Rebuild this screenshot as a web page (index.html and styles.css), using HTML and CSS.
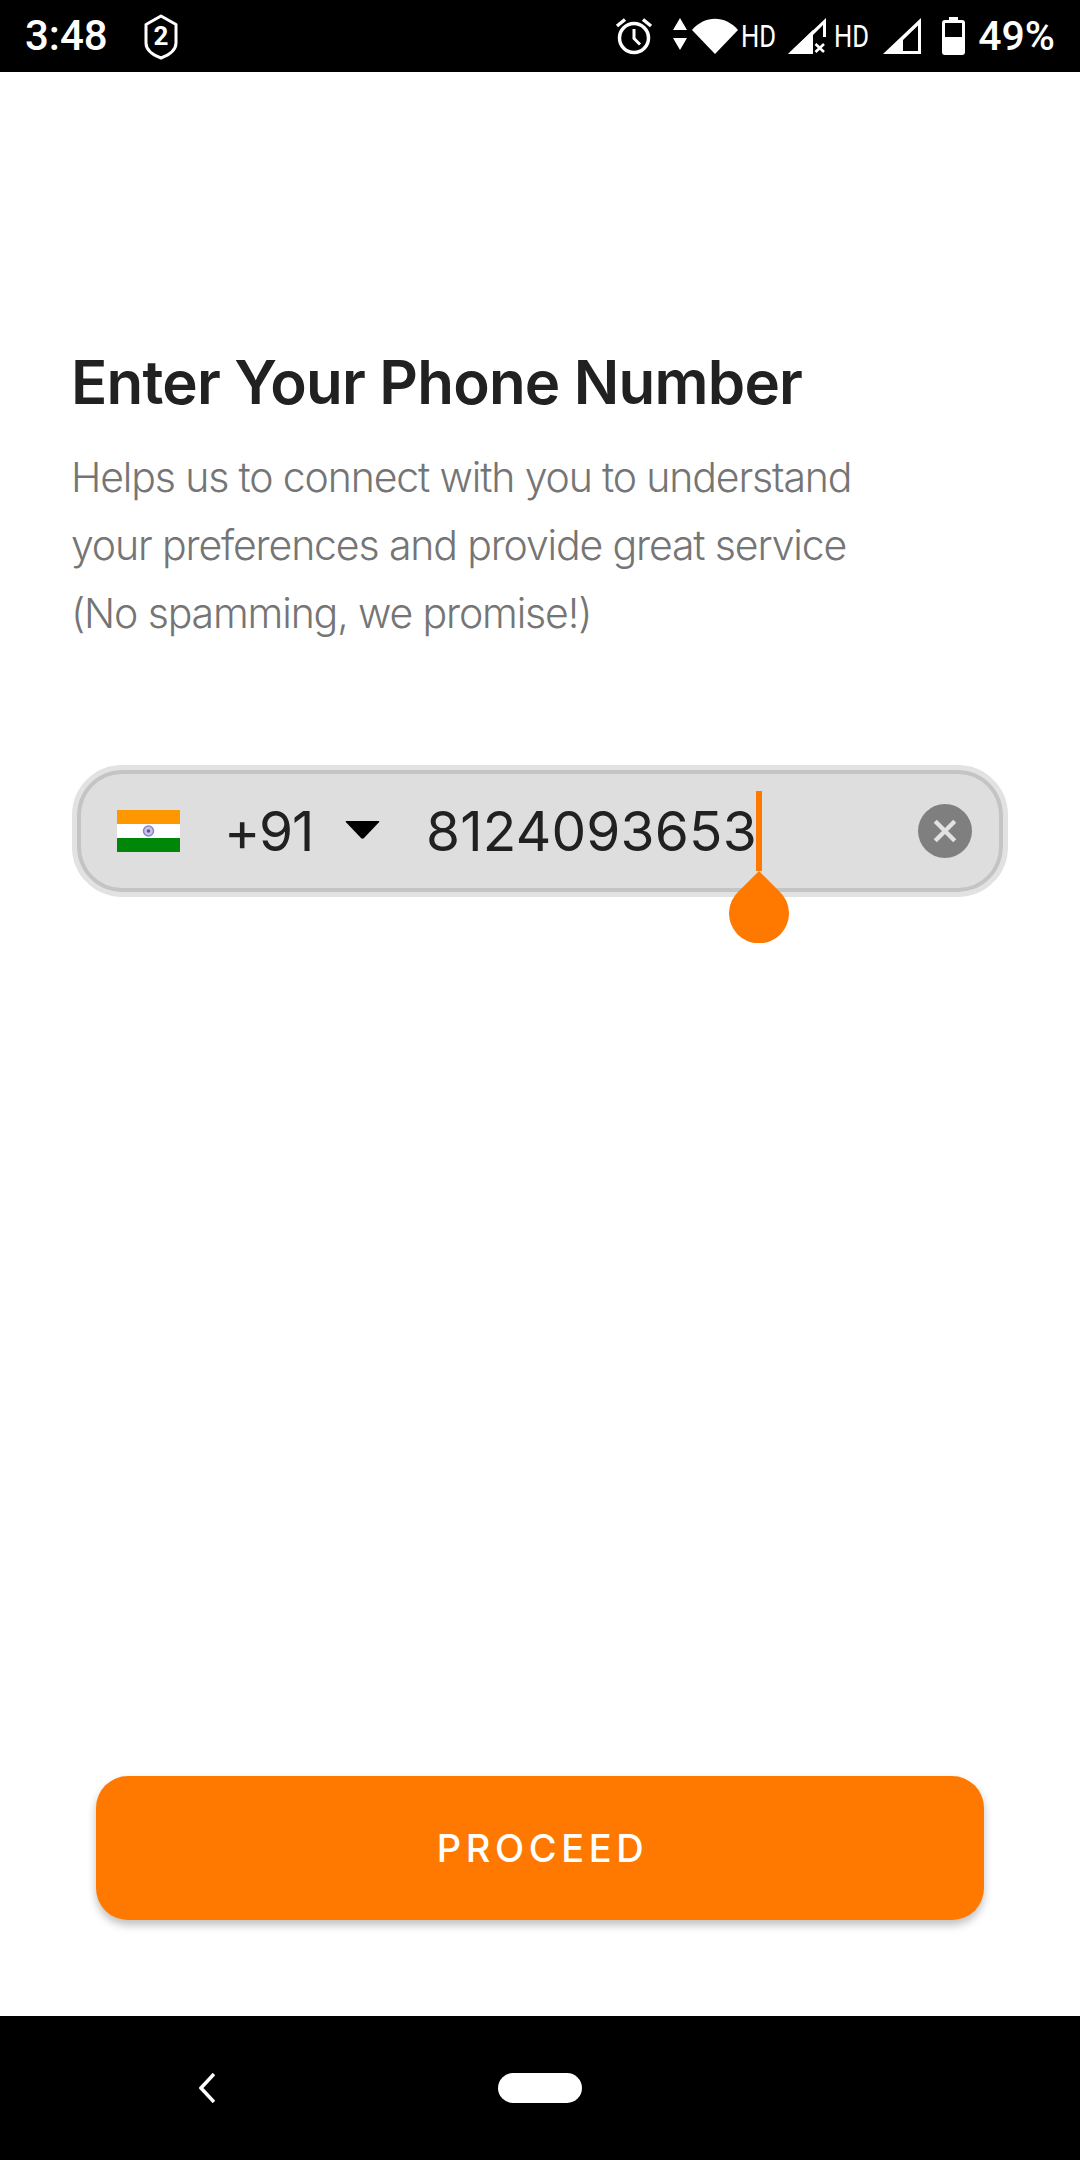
FILE: index.html
```html
<!DOCTYPE html>
<html lang="en">
<head>
<meta charset="utf-8">
<title>Enter Your Phone Number</title>
<link rel="stylesheet" href="styles.css">
</head>
<body>
<div class="phone">
  <header class="status">
    <div class="status-left">
      <span class="time">3:48</span>
      <span class="shield">
        <svg width="34" height="46" viewBox="0 0 34 46"><path d="M17 2 L32 10.500 V29 C32 36 25 41 17 44 C9 41 2 36 2 29 V10.500 Z" fill="none" stroke="#fff" stroke-width="3" stroke-linejoin="round"/></svg>
        <span class="shield-num">2</span>
      </span>
    </div>
    <div class="status-right">
      <svg class="i-alarm" width="38" height="38" viewBox="0 0 38 38"><circle cx="19" cy="21" r="14.500" fill="none" stroke="#fff" stroke-width="3.500"/><path d="M19 12 V21.500 L25 27.500" fill="none" stroke="#fff" stroke-width="3"/><path d="M2 9 L10 2.500 M36 9 L28 2.500" stroke="#fff" stroke-width="3.500"/></svg>
      <svg class="i-arrows" width="14" height="32" viewBox="0 0 14 32"><path d="M7 0 L14 12 H0 Z M0 20 H14 L7 32 Z" fill="#fff"/></svg>
      <svg class="i-wifi" width="46" height="36" viewBox="0 0 46 36"><path d="M0 12 C13 -3 33 -3 46 12 L23 36 Z" fill="#fff"/></svg>
      <span class="hd">HD</span>
      <svg class="i-sig1" width="38" height="36" viewBox="0 0 38 36"><path d="M0 36 L38 0 V19 L35 19 V7 L25 17 Z" fill="#fff"/><path d="M0 36 L25 12 V36 Z" fill="#fff"/><path d="M26 22 H38 V36 H26 Z" fill="#000"/><path d="M27.500 26 L36 34 M36 26 L27.500 34" stroke="#fff" stroke-width="2.600"/></svg>
      <span class="hd hd-2">HD</span>
      <svg class="i-sig2" width="38" height="36" viewBox="0 0 38 36"><path fill-rule="evenodd" d="M0 36 L38 0 V36 Z M20 33 H35 V7.500 L20 22 Z" fill="#fff"/></svg>
      <svg class="i-batt" width="23" height="38" viewBox="0 0 23 38"><path fill-rule="evenodd" d="M7 0 H16 V3 H20 Q23 3 23 6 V35 Q23 38 20 38 H3 Q0 38 0 35 V6 Q0 3 3 3 H7 Z M3 6 V20 H20 V6 Z" fill="#fff"/></svg>
      <span class="pct">49%</span>
    </div>
  </header>

  <main class="content">
    <h1 class="title">Enter Your Phone Number</h1>
    <p class="sub">Helps us to connect with you to understand<br>your preferences and provide great service<br>(No spamming, we promise!)</p>

    <div class="field">
      <svg class="flag" width="63" height="42" viewBox="0 0 63 42"><rect width="63" height="14" fill="#ff9800"/><rect y="14" width="63" height="14" fill="#fff"/><rect y="28" width="63" height="14" fill="#00870a"/><circle cx="31.500" cy="21" r="5" fill="#c9c3e6" stroke="#8c86c4" stroke-width="1.500"/><circle cx="31.500" cy="21" r="1.800" fill="#5a52a8"/></svg>
      <span class="code">+91</span>
      <svg class="caret-down" width="35" height="18" viewBox="0 0 35 18"><path d="M1.500 0 H33.500 Q35 0 34 1.200 L19 17 Q17.500 18.500 16 17 L1 1.200 Q0 0 1.500 0 Z" fill="#000"/></svg>
      <span class="number">8124093653</span>
      <span class="clear"><svg width="26" height="26" viewBox="0 0 24 24"><path d="M3 3 L21 21 M21 3 L3 21" stroke="#e2e2e2" stroke-width="4"/></svg></span>
      <span class="cursor"></span>
      <svg class="handle" width="60" height="72" viewBox="0 0 60 72"><path d="M30 0 L50 20 A30 30 0 1 1 10 20 Z" fill="#ff7900"/></svg>
    </div>

    <div class="spacer"></div>

    <button class="proceed" type="button">PROCEED</button>
  </main>

  <footer class="nav">
    <svg class="back" width="16" height="30" viewBox="0 0 16 30"><path d="M15 1 L2 15 L15 29" fill="none" stroke="#fff" stroke-width="3.500"/></svg>
    <span class="home"></span>
  </footer>
</div>
</body>
</html>
```
FILE: styles.css
```css
* { box-sizing: border-box; }
html, body { margin: 0; padding: 0; background: #fff; }
.phone { width: 1080px; height: 2160px; display: flex; flex-direction: column; font-family: Inter, "Liberation Sans", sans-serif; overflow: hidden; }

.status { height: 72px; background: #000; color: #fff; display: flex; justify-content: space-between; align-items: center; padding: 0 25px 0 25px; font-family: Roboto, sans-serif; flex: none; }
.status-left { display: flex; align-items: center; }
.time { font-size: 42px; font-weight: 500; width: 119px; line-height: 72px; }
.shield { position: relative; display: flex; width: 34px; height: 46px; margin-top: 1px; }
.shield-num { position: absolute; left: 0; right: 0; top: 8px; text-align: center; font-size: 26px; line-height: 28px; font-weight: 700; }
.status-right { display: flex; align-items: center; }
.i-alarm { margin-right: 20px; }
.i-arrows { margin-right: 5px; margin-top: -4px; }
.i-wifi { margin-right: 3px; }
.hd { display: inline-block; width: 35px; font-size: 32px; font-weight: 400; line-height: 36px; transform: scaleX(.8); transform-origin: left center; white-space: nowrap; margin-right: 12px; }
.hd-2 { margin-left: 8px; margin-right: 14px; }
.i-sig2 { margin-right: 21px; }
.i-batt { margin-right: 13px; }
.pct { font-size: 41px; font-weight: 500; line-height: 72px; }

.content { flex: 1; display: flex; flex-direction: column; padding: 274px 72px 96px; min-height: 0; }
.title { margin: 0 0 0 -1px; font-size: 60px; line-height: 72px; font-weight: 600; color: #212121; letter-spacing: -0.8px; white-space: nowrap; }
.sub { margin: 25px 0 0 -1px; font-size: 41px; line-height: 68px; font-weight: 300; color: #757575; letter-spacing: -1.15px; white-space: nowrap; }

.field { position: relative; margin-top: 118px; height: 132px; width: 936px; display: flex; align-items: center; padding-left: 40px; background: #dedede; border: 5px solid #e2e2e2; border-radius: 50px; box-shadow: inset 0 0 0 4px #c4c4c4; }
.flag { flex: none; }
.code { margin-left: 44px; font-size: 55px; line-height: 60px; color: #212121; letter-spacing: -1.3px; }
.caret-down { margin-left: 32px; flex: none; margin-top: -2px; }
.number { margin-left: 46px; font-size: 55px; line-height: 60px; color: #212121; letter-spacing: .2px; }
.clear { position: absolute; right: 31px; top: 34px; width: 54px; height: 54px; border-radius: 50%; background: #7f7f7f; display: flex; align-items: center; justify-content: center; }
.cursor { position: absolute; left: 679px; top: 21px; width: 6px; height: 80px; background: #ff7900; }
.handle { position: absolute; left: 652px; top: 101px; }

.spacer { flex: 1; }
.proceed { align-self: center; width: 888px; height: 144px; border: 0; padding: 0 0 0 5px; border-radius: 32px; background: #ff7900; color: #fff; font-family: Inter, sans-serif; font-size: 38px; font-weight: 500; letter-spacing: 4.6px; box-shadow: 0 5px 8px rgba(0,0,0,.25); }

.nav { height: 144px; background: #000; flex: none; position: relative; display: flex; align-items: center; padding: 0 0 0 199px; }
.back { margin-right: 283px; }
.home { width: 84px; height: 30px; border-radius: 15px; background: #fff; }
```
